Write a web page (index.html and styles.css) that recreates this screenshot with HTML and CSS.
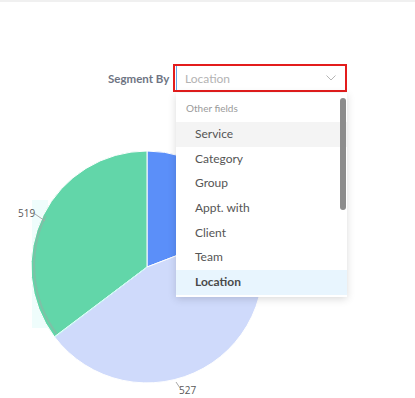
FILE: index.html
```html
<!DOCTYPE html>
<html lang="en">
<head>
    <meta charset="UTF-8">
    <meta name="viewport" content="width=device-width, initial-scale=1.0">
    <title>Segment By</title>
    <link rel="stylesheet" href="styles.css">
</head>
<body>
    <div class="page">
        <div class="toolbar">
            <label class="toolbar-label">Segment By</label>
            <div class="select-wrap">
                <div class="select">
                    <span class="select-placeholder">Location</span>
                    <svg class="select-arrow" width="10" height="6" viewBox="0 0 10 6">
                        <path d="M0.5 0.5 L5 5 L9.5 0.5" fill="none" stroke="#b5b5b5" stroke-width="1"/>
                    </svg>
                </div>

                <div class="menu">
                    <div class="menu-group">Other fields</div>
                    <div class="menu-item hover">Service</div>
                    <div class="menu-item">Category</div>
                    <div class="menu-item">Group</div>
                    <div class="menu-item">Appt. with</div>
                    <div class="menu-item">Client</div>
                    <div class="menu-item">Team</div>
                    <div class="menu-item selected">Location</div>
                    <div class="menu-scrollbar"></div>
                </div>
            </div>
        </div>

        <div class="chart">
            <svg width="415" height="298" viewBox="0 0 415 298">
                <rect x="32" y="100" width="16" height="128" fill="#effdfc"/>
                <path d="M147 167 L147 51 A116 116 0 0 1 255.3 125.4 Z" fill="#5b8ff9" stroke="#fff" stroke-width="1"/>
                <path d="M147 167 L255.3 125.4 A116 116 0 0 1 54.4 236.8 Z" fill="#cfdafb" stroke="#fff" stroke-width="1"/>
                <path d="M147 167 L54.4 236.8 A116 116 0 0 1 147 51 Z" fill="#62d6a9" stroke="#fff" stroke-width="1"/>
                <path d="M56.5 233.5 A114 114 0 0 1 45.5 116" fill="none" stroke="#9fa8a3" stroke-width="2" opacity="0.45"/>
                <line x1="55" y1="237" x2="147" y2="167" stroke="#c8fbf6" stroke-width="1"/>

                <line x1="35" y1="114" x2="45" y2="121" stroke="#aaa" stroke-width="1"/>
                <text x="18" y="117" class="pie-label">519</text>
                <line x1="176" y1="282" x2="180" y2="288" stroke="#aaa" stroke-width="1"/>
                <text x="179" y="294" class="pie-label">527</text>
            </svg>
        </div>
    </div>
</body>
</html>
```

FILE: styles.css
```css
body {
    margin: 0;
    padding: 0;
    font-family: Lato, "Open Sans", sans-serif;
    background-color: #fff;
}

.page {
    border-top: 2px solid #f0f0f0;
    width: 415px;
    height: 396px;
    overflow: hidden;
}

.toolbar {
    display: flex;
    align-items: center;
    padding-top: 62px;
    padding-left: 108px;
}

.toolbar-label {
    width: 60px;
    margin-right: 5px;
    text-align: right;
    white-space: nowrap;
    font-size: 11.5px;
    font-weight: bold;
    color: #6e7483;
}

.select-wrap {
    position: relative;
}

.select {
    box-sizing: border-box;
    width: 174px;
    height: 28px;
    border: 2px solid #e31c1c;
    display: flex;
    align-items: center;
    justify-content: space-between;
    padding: 0 9px 0 10px;
    box-shadow: inset 1px 0 0 #fff, inset 2px 0 0 #6aa7e8;
}

.select-placeholder {
    font-size: 12px;
    color: #b3b3b3;
}

.select-arrow {
    display: block;
}

.menu {
    position: absolute;
    top: 29px;
    left: 3px;
    width: 171px;
    height: 204px;
    background-color: #fff;
    box-shadow: 0 2px 8px rgba(0, 0, 0, 0.15);
    z-index: 2;
}

.menu-group {
    height: 29px;
    line-height: 31px;
    padding-left: 10px;
    font-size: 10px;
    color: #9a9a9a;
}

.menu-item {
    height: 24.7px;
    line-height: 24.7px;
    padding-left: 19px;
    font-size: 12px;
    color: #555;
}

.menu-item.hover {
    background-color: #f4f4f4;
}

.menu-item.selected {
    background-color: #e8f5fe;
    font-weight: bold;
    color: #4a4a4a;
}

.menu-scrollbar {
    position: absolute;
    top: 5px;
    right: 1px;
    width: 6px;
    height: 112px;
    border-radius: 3px;
    background-color: #8c8c8c;
}

.chart {
    margin-top: 8px;
}

.chart svg {
    display: block;
}

.pie-label {
    font-family: "Open Sans", sans-serif;
    font-size: 10px;
    fill: #595959;
}
```
